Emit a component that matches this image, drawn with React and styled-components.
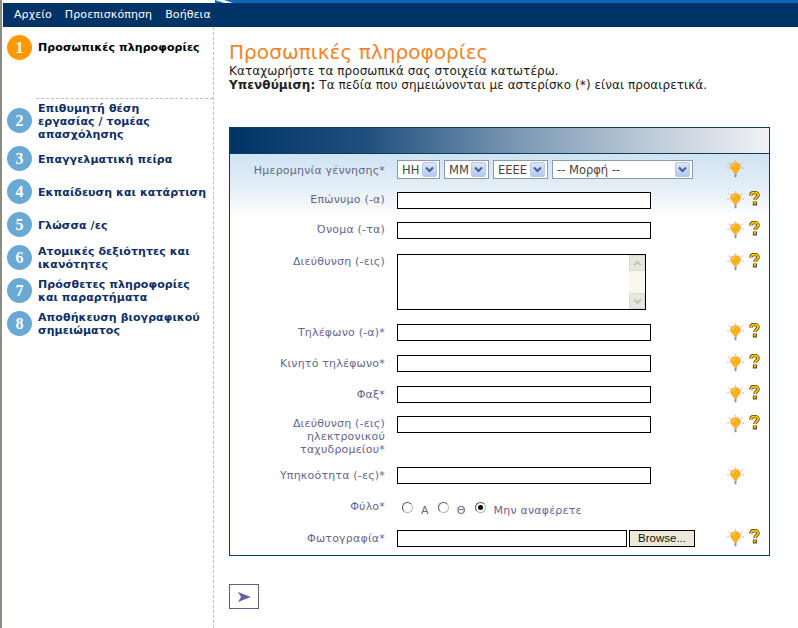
import React from "react";
import styled, { createGlobalStyle } from "styled-components";

const Global = createGlobalStyle`
  html, body { margin: 0; padding: 0; background: #fff; }
  body { font-family: "DejaVu Sans", Verdana, sans-serif; font-size: 11px; overflow: hidden; }
  * { box-sizing: border-box; }
`;

const Page = styled.div`
  width: 798px; height: 628px; display: flex; flex-direction: column;
  border-left: 2px solid #8c8c84; background: #fff; overflow: hidden;
`;
const TopStrip = styled.div`
  height: 3px; display: flex; background: #fff; flex: none;
`;
const TopFill = styled.div`
  flex: 1; background: #0f67b5; margin-left: 213px; display: flex;
`;
const MenuBar = styled.nav`
  height: 24px; flex: none; background: #003366; display: flex; align-items: center;
  padding-left: 11px; gap: 13px; margin-left: 1px;
`;
const MenuItem = styled.span`
  color: #fff; font-size: 11px; line-height: 14px; letter-spacing: 0.1px;
`;
const Columns = styled.div`
  flex: 1; display: flex; min-height: 0;
`;
const Sidebar = styled.aside`
  width: 212px; flex: none; border-right: 1px dashed #bdbdbd; padding: 8px 0 0 5px;
  display: flex; flex-direction: column;
`;
const Step = styled.div`
  height: ${p => p.$h}px; display: flex; align-items: ${p => (p.$top ? "flex-start" : "center")};
  gap: 6px; position: relative;
  ${p => p.$rule && `&::before { content: ""; position: absolute; left: 29px; right: 0; top: -1px; border-top: 1px dashed #bdbdbd; }`}
`;
const Circle = styled.div`
  width: 25px; height: 25px; border-radius: 50%; flex: none;
  background: ${p => (p.$active ? "#ff9900" : "#6aa9d3")}; color: #fff;
  font: bold 16px/25px "Liberation Serif", serif; text-align: center;
`;
const StepLabel = styled.div`
  font-size: 11px; line-height: 13px; font-weight: bold; letter-spacing: 0.08px;
  color: ${p => (p.$active ? "#000" : "#0f2f66")};
  padding-top: ${p => (p.$active ? 6 : p.$drop ? 2 : 0)}px;
`;
const Main = styled.main`
  flex: 1; padding: 13px 0 0 15px; min-width: 0;
`;
const Title = styled.h1`
  margin: 0; font-size: 20px; line-height: 25px; font-weight: normal; color: #f0852c; letter-spacing: 0.07px;
`;
const Intro = styled.p`
  margin: -1px 0 0; font-size: 12px; line-height: 14px; color: #222; letter-spacing: 0.07px;
`;
const Panel = styled.section`
  width: 541px; margin-top: 35px; border: 1px solid #0c3c5c; height: 429px;
  background: linear-gradient(#cfe3f1 26px, #e3eef6 58px, #fff 90px);
`;
const PanelHead = styled.div`
  height: 26px; border-bottom: 1px solid #0c3c5c;
  background: linear-gradient(90deg, #003366 0, #1f4f7e 25%, #7f9cb6 55%, #c3cfdb 80%, #f0f2f5 100%);
`;
const Row = styled.div`
  height: ${p => p.$h}px; padding-top: ${p => p.$pt ?? 7}px;
  display: grid; grid-template-columns: 155px 340px 20px 18px;
  align-items: start;
`;
const Label = styled.label`
  color: #66668f; font-size: 11px; line-height: 13px; text-align: right; padding-top: ${p => p.$lt ?? 2}px; letter-spacing: 0.2px;
`;
const Field = styled.div`
  margin-left: 12px; display: flex; align-items: flex-start; gap: ${p => p.$gap ?? 0}px;
`;
const TextInput = styled.input`
  width: ${p => p.$w ?? 254}px; height: 17px; border: 1px solid #000; background: #fff; padding: 0 2px; margin: 0; display: block; outline: 0;
`;
const AreaBox = styled.div`
  width: 249px; height: 56px; border: 1px solid #000; background: #fff; display: flex;
`;
const Area = styled.textarea`
  flex: 1; border: 0; padding: 2px; margin: 0; resize: none; outline: 0; background: transparent;
`;
const Scroll = styled.div`
  width: 16px; flex: none; background: #f8f8f1; display: flex; flex-direction: column; justify-content: space-between;
`;
const ScrollBtn = styled.div`
  height: 16px; background: #e6e8e0; border: 1px solid #d8dad2; display: flex; align-items: center; justify-content: center;
`;
const SelectBox = styled.div`
  width: ${p => p.$w}px; height: 19px; border: 1px solid #8a9bb0; background: #fff; display: flex; align-items: center;
  justify-content: space-between; padding: 0 2px 0 4px; color: #444; font-size: 11.5px;
  margin-top: -1px;
`;
const SelectArrow = styled.span`
  width: 15px; height: 15px; border-radius: 2px; flex: none; display: flex; align-items: center; justify-content: center;
  background: linear-gradient(#dde6f7, #b6c8ee); border: 1px solid #b9c9ea;
`;
const Radios = styled.div`
  display: flex; align-items: flex-start; margin: 6px 0 0 17px;
`;
const Radio = styled.span`
  width: 11px; height: 11px; border-radius: 50%; border: 1px solid #b9b9b0; border-top-color: #555; border-left-color: #555;
  background: #fff; position: relative; flex: none;
  ${p => p.$on && `&::after { content: ""; position: absolute; left: 2px; top: 2px; width: 5px; height: 5px; border-radius: 50%; background: #000; }`}
`;
const RadioText = styled.span`
  color: #66668f; font-size: 11px; line-height: 13px; margin: 2px ${p => p.$mr ?? 9}px 0 8px; letter-spacing: 0.2px;
`;
const BrowseBtn = styled.button`
  width: 66px; height: 17px; margin: 0 0 0 2px; padding: 0; border: 1px solid #000; background: #ece9d8;
  font: 11.5px/15px "Liberation Sans", Arial, sans-serif; color: #111;
`;
const IconCell = styled.div`
  display: flex; justify-content: center; margin-top: ${p => p.$mt ?? -1}px;
`;
const NextBtn = styled.button`
  display: flex; align-items: center; justify-content: center; width: 30px; height: 25px; margin-top: 28px; padding: 0;
  border: 1px solid #5f5f85; background: #fff;
`;

const Swoosh = () => (
  <svg width="24" height="3" viewBox="0 0 24 3">
    <path d="M0 0H9C12 1 15 2 18 3H9C6 2 3 1 0 0Z" fill="#fff" />
  </svg>
);
const Bulb = () => (
  <svg width="17" height="18" viewBox="0 0 17 18">
    <path d="M1.500 2.500 3.500 4.500M8.500 0V1.500M15.500 2.500 13.500 4.500M0 8H2M15 8H17" stroke="#f4a0b8" strokeWidth="1" fill="none" />
    <path d="M8.500 2.500C5.300 2.500 3.500 4.500 3.500 7 3.500 9.500 6.500 10.500 7.500 13.500H9.500C10.500 10.500 13.500 9.500 13.500 7 13.500 4.500 11.700 2.500 8.500 2.500Z" fill="#ffb020" stroke="#f09c10" strokeWidth=".5" />
    <path d="M5.500 6.500C6 5 7 4.200 8.200 4.200" stroke="#ffe9a0" strokeWidth="1" fill="none" />
    <path d="M7.500 14H9.500V16.500L8.500 17.500 7.500 16.500Z" fill="#8d8db8" />
  </svg>
);
const Help = () => (
  <svg width="11" height="15" viewBox="0 0 11 15">
    <path d="M2 4.500C2 2.500 3.500 1.500 5.500 1.500S9 2.700 9 4.300C9 6.500 6 6.500 6 9" fill="none" stroke="#3a3000" strokeWidth="3.400" />
    <path d="M2 4.500C2 2.500 3.500 1.500 5.500 1.500S9 2.700 9 4.300C9 6.500 6 6.500 6 9" fill="none" stroke="#ffc400" strokeWidth="2" />
    <rect x="3.800" y="10.500" width="4.200" height="4" fill="#5a4a10" />
    <rect x="4.600" y="11" width="2.400" height="2.400" fill="#e0b020" />
  </svg>
);
const Chevron = ({ up, color = "#3f5f9e" }) => (
  <svg width="9" height="7" viewBox="0 0 9 7">
    <path d={up ? "M1 5.500 4.500 2 8 5.500" : "M1 1.500 4.500 5 8 1.500"} fill="none" stroke={color} strokeWidth="2" />
  </svg>
);
const Select = ({ w, children }) => (
  <SelectBox $w={w}>
    <span>{children}</span>
    <SelectArrow><Chevron /></SelectArrow>
  </SelectBox>
);

const steps = [
  { n: 1, t: "Προσωπικές πληροφορίες", h: 64, active: true, top: true },
  { n: 2, t: <>Επιθυμητή θέση<br />εργασίας / τομέας<br />απασχόλησης</>, h: 43, rule: true, drop: true },
  { n: 3, t: "Επαγγελματική πείρα", h: 33, drop: true },
  { n: 4, t: "Εκπαίδευση και κατάρτιση", h: 33, drop: true },
  { n: 5, t: "Γλώσσα /ες", h: 33, drop: true },
  { n: 6, t: <>Ατομικές δεξιότητες και<br />ικανότητες</>, h: 33 },
  { n: 7, t: <>Πρόσθετες πληροφορίες<br />και παραρτήματα</>, h: 33 },
  { n: 8, t: <>Αποθήκευση βιογραφικού<br />σημειώματος</>, h: 33 },
];

const IconRow = ({ h, pt, lt, label, help = true, mt, gap, children }) => (
  <Row $h={h} $pt={pt}>
    <Label $lt={lt}>{label}</Label>
    <Field $gap={gap}>{children}</Field>
    <IconCell $mt={mt}><Bulb /></IconCell>
    <IconCell $mt={mt}>{help && <Help />}</IconCell>
  </Row>
);

export default function App() {
  return (
    <Page>
      <Global />
      <TopStrip><TopFill><Swoosh /></TopFill></TopStrip>
      <MenuBar>
        <MenuItem>Αρχείο</MenuItem>
        <MenuItem>Προεπισκόπηση</MenuItem>
        <MenuItem>Βοήθεια</MenuItem>
      </MenuBar>
      <Columns>
        <Sidebar>
          {steps.map(s => (
            <Step key={s.n} $h={s.h} $rule={s.rule} $top={s.top}>
              <Circle $active={s.active}>{s.n}</Circle>
              <StepLabel $active={s.active} $drop={s.drop}>{s.t}</StepLabel>
            </Step>
          ))}
        </Sidebar>
        <Main>
          <Title>Προσωπικές πληροφορίες</Title>
          <Intro>Καταχωρήστε τα προσωπικά σας στοιχεία κατωτέρω.<br /><b>Υπενθύμιση:</b> Τα πεδία που σημειώνονται με αστερίσκο (*) είναι προαιρετικά.</Intro>
          <Panel>
            <PanelHead />
            <IconRow h={31} lt={3} label="Ημερομηνία γέννησης*" help={false} gap={4}>
              <Select w={43}>ΗΗ</Select>
              <Select w={45}>ΜΜ</Select>
              <Select w={55}>ΕΕΕΕ</Select>
              <Select w={141}>-- Μορφή --</Select>
            </IconRow>
            <IconRow h={30} lt={1} label="Επώνυμο (-α)"><TextInput /></IconRow>
            <IconRow h={32} lt={1} label="Όνομα (-τα)"><TextInput /></IconRow>
            <IconRow h={70} lt={1} label="Διεύθυνση (-εις)">
              <AreaBox>
                <Area />
                <Scroll>
                  <ScrollBtn><Chevron up color="#c4c6bc" /></ScrollBtn>
                  <ScrollBtn><Chevron color="#c4c6bc" /></ScrollBtn>
                </Scroll>
              </AreaBox>
            </IconRow>
            <IconRow h={31} label="Τηλέφωνο (-α)*"><TextInput /></IconRow>
            <IconRow h={31} label="Κινητό τηλέφωνο*"><TextInput /></IconRow>
            <IconRow h={30} label="Φαξ*"><TextInput /></IconRow>
            <IconRow h={51} lt={1} label={<>Διεύθυνση (-εις)<br />ηλεκτρονικού<br />ταχυδρομείου*</>}><TextInput /></IconRow>
            <IconRow h={33} label="Υπηκοότητα (-ες)*" help={false} mt={0}><TextInput /></IconRow>
            <Row $h={30} $pt={3}>
              <Label $lt={4}>Φύλο*</Label>
              <Radios>
                <Radio /><RadioText>Α</RadioText>
                <Radio /><RadioText>Θ</RadioText>
                <Radio $on /><RadioText>Μην αναφέρετε</RadioText>
              </Radios>
            </Row>
            <IconRow h={33} label="Φωτογραφία*">
              <TextInput $w={230} /><BrowseBtn>Browse...</BrowseBtn>
            </IconRow>
          </Panel>
          <NextBtn aria-label="Επόμενο">
            <svg width="13" height="10" viewBox="0 0 13 10"><path d="M0 0 13 5 0 10 3 5Z" fill="#66669a" /></svg>
          </NextBtn>
        </Main>
      </Columns>
    </Page>
  );
}
